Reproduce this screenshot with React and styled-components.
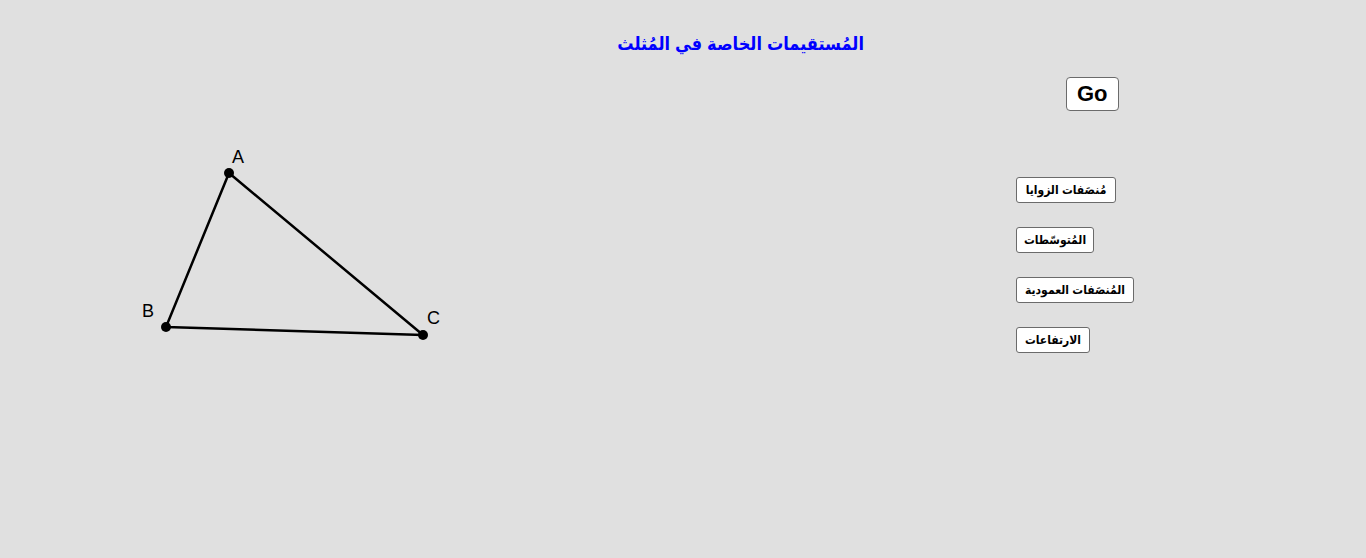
import React from 'react';
import styled, { createGlobalStyle } from 'styled-components';

const GlobalStyle = createGlobalStyle`
  html, body {
    margin: 0;
    padding: 0;
    background: #e0e0e0;
  }
  body {
    font-family: "Liberation Sans", Arial, sans-serif;
  }
`;

const arabicFont = `"Liberation Sans", "DejaVu Sans Condensed", "DejaVu Sans", sans-serif`;

const Stage = styled.div`
  width: 1366px;
  height: 558px;
  background: #e0e0e0;
  display: flex;
  flex-direction: column;
  overflow: hidden;
`;

const Title = styled.h1`
  margin: 0;
  padding-top: 30px;
  height: 70px;
  box-sizing: border-box;
  width: 864px;
  direction: rtl;
  text-align: right;
  font-family: ${arabicFont};
  font-size: 18px;
  font-weight: bold;
  line-height: 28px;
  color: #0000ff;
`;

const Body = styled.div`
  display: flex;
  flex-direction: row;
`;

const Canvas = styled.svg`
  display: block;
  width: 1016px;
  height: 420px;
  flex: none;
`;

const Controls = styled.div`
  display: flex;
  flex-direction: column;
  align-items: flex-start;
  padding-top: 7px;
`;

const GoButton = styled.button`
  margin-left: 50px;
  height: 34px;
  padding: 0 10px;
  background: #fff;
  border: 1px solid #6b6b6b;
  border-radius: 4px;
  font-family: "Liberation Sans", Arial, sans-serif;
  font-size: 22px;
  font-weight: bold;
  color: #000;
  line-height: 1;
`;

const ToolList = styled.div`
  margin-top: 66px;
  display: flex;
  flex-direction: column;
  align-items: flex-start;
  gap: 24px;
`;

const ToolButton = styled.button`
  width: ${(p) => p.$w}px;
  height: 26px;
  padding: 0;
  background: #fff;
  border: 1px solid #6b6b6b;
  border-radius: 3px;
  direction: rtl;
  font-family: ${arabicFont};
  font-size: 12px;
  font-weight: bold;
  color: #000;
  white-space: nowrap;
`;

const Label = styled.text`
  font-family: "Liberation Sans", Arial, sans-serif;
  font-size: 18px;
  fill: #000;
`;

const points = {
  A: { x: 229, y: 173, lx: 232, ly: 163 },
  B: { x: 166, y: 327, lx: 142, ly: 317 },
  C: { x: 423, y: 335, lx: 427, ly: 324 },
};

const tools = [
  { text: 'مُنصَفات الزوايا', w: 100 },
  { text: 'المُتوسّطات', w: 78 },
  { text: 'المُنصَفات العمودية', w: 118 },
  { text: 'الارتفاعات', w: 74 },
];

const App = () => {
  const { A, B, C } = points;
  return (
    <>
      <GlobalStyle />
      <Stage>
        <Title>المُستقيمات الخاصة في المُثلث</Title>
        <Body>
          <Canvas viewBox="0 70 1016 420">
            <polygon
              points={`${A.x},${A.y} ${B.x},${B.y} ${C.x},${C.y}`}
              fill="none"
              stroke="#000"
              strokeWidth="2.5"
              strokeLinejoin="round"
            />
            {Object.entries(points).map(([name, p]) => (
              <g key={name}>
                <circle cx={p.x} cy={p.y} r="5" fill="#000" />
                <Label x={p.lx} y={p.ly}>
                  {name}
                </Label>
              </g>
            ))}
          </Canvas>
          <Controls>
            <GoButton>Go</GoButton>
            <ToolList>
              {tools.map((t) => (
                <ToolButton key={t.text} $w={t.w}>
                  {t.text}
                </ToolButton>
              ))}
            </ToolList>
          </Controls>
        </Body>
      </Stage>
    </>
  );
};

export default App;
